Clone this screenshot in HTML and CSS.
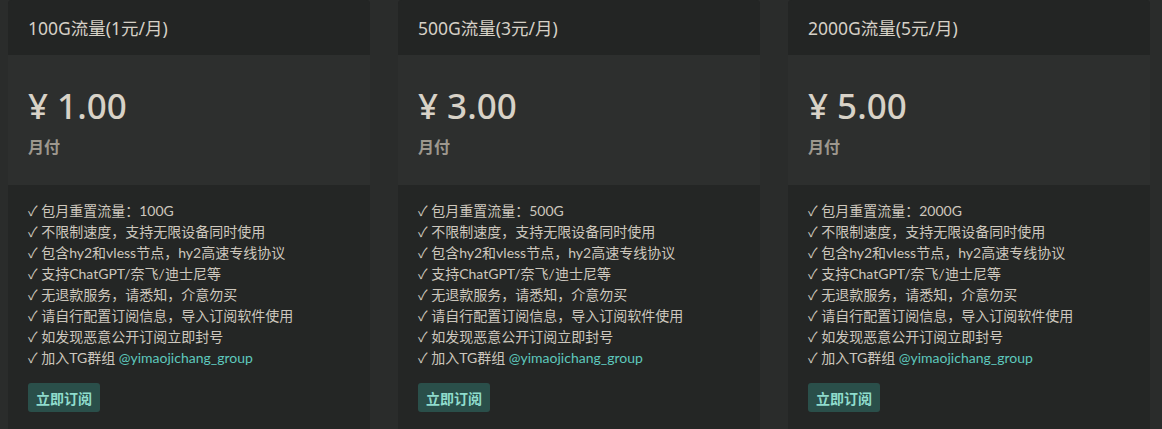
FILE: index.html
```
<!DOCTYPE html>
<html lang="zh-CN">
<head>
    <meta charset="UTF-8">
    <meta name="viewport" content="width=device-width, initial-scale=1.0">
    <title>套餐</title>
    <link rel="stylesheet" href="styles.css">
</head>
<body>
    <div class="planes">
        <div class="plan">
            <div class="plan-head">100G流量(1元/月)</div>
            <div class="plan-precio">
                <div class="monto">¥ 1.00</div>
                <div class="periodo">月付</div>
            </div>
            <div class="plan-cuerpo">
                <ul class="lista">
                    <li>✓ 包月重置流量：100G</li>
                    <li>✓ 不限制速度，支持无限设备同时使用</li>
                    <li>✓ 包含hy2和vless节点，hy2高速专线协议</li>
                    <li>✓ 支持ChatGPT/奈飞/迪士尼等</li>
                    <li>✓ 无退款服务，请悉知，介意勿买</li>
                    <li>✓ 请自行配置订阅信息，导入订阅软件使用</li>
                    <li>✓ 如发现恶意公开订阅立即封号</li>
                    <li>✓ 加入TG群组 <a href="#">@yimaojichang_group</a></li>
                </ul>
                <button class="boton">立即订阅</button>
            </div>
        </div>
        <div class="plan">
            <div class="plan-head">500G流量(3元/月)</div>
            <div class="plan-precio">
                <div class="monto">¥ 3.00</div>
                <div class="periodo">月付</div>
            </div>
            <div class="plan-cuerpo">
                <ul class="lista">
                    <li>✓ 包月重置流量：500G</li>
                    <li>✓ 不限制速度，支持无限设备同时使用</li>
                    <li>✓ 包含hy2和vless节点，hy2高速专线协议</li>
                    <li>✓ 支持ChatGPT/奈飞/迪士尼等</li>
                    <li>✓ 无退款服务，请悉知，介意勿买</li>
                    <li>✓ 请自行配置订阅信息，导入订阅软件使用</li>
                    <li>✓ 如发现恶意公开订阅立即封号</li>
                    <li>✓ 加入TG群组 <a href="#">@yimaojichang_group</a></li>
                </ul>
                <button class="boton">立即订阅</button>
            </div>
        </div>
        <div class="plan">
            <div class="plan-head">2000G流量(5元/月)</div>
            <div class="plan-precio">
                <div class="monto">¥ 5.00</div>
                <div class="periodo">月付</div>
            </div>
            <div class="plan-cuerpo">
                <ul class="lista">
                    <li>✓ 包月重置流量：2000G</li>
                    <li>✓ 不限制速度，支持无限设备同时使用</li>
                    <li>✓ 包含hy2和vless节点，hy2高速专线协议</li>
                    <li>✓ 支持ChatGPT/奈飞/迪士尼等</li>
                    <li>✓ 无退款服务，请悉知，介意勿买</li>
                    <li>✓ 请自行配置订阅信息，导入订阅软件使用</li>
                    <li>✓ 如发现恶意公开订阅立即封号</li>
                    <li>✓ 加入TG群组 <a href="#">@yimaojichang_group</a></li>
                </ul>
                <button class="boton">立即订阅</button>
            </div>
        </div>
    </div>
</body>
</html>
```
FILE: styles.css
```
body {
    margin: 0;
    background: #2a2c2b;
    color: #cdc7bd;
    font-family: "Noto Sans", "Noto Sans CJK SC", sans-serif;
    height: 429px;
    overflow: hidden;
}
.planes {
    display: flex;
    gap: 28px;
    padding-left: 8px;
    height: 429px;
}
.plan {
    width: 362px;
    display: flex;
    flex-direction: column;
    background: #242625;
    border-radius: 4px 4px 0 0;
}
.plan-head {
    height: 55px;
    box-sizing: border-box;
    padding: 0 20px;
    display: flex;
    align-items: center;
    font-size: 17.5px;
    color: #d6d0c6;
    background: #232524;
    border-radius: 4px 4px 0 0;
}
.plan-precio {
    height: 130px;
    box-sizing: border-box;
    padding: 27px 20px 0;
    background: #2d2f2e;
}
.monto {
    font-size: 35px;
    font-weight: 500;
    line-height: 48px;
    color: #d8d2c7;
}
.periodo {
    margin-top: 6px;
    font-size: 16px;
    font-weight: bold;
    color: #9e988e;
    line-height: 22px;
}
.plan-cuerpo {
    flex: 1;
    padding: 15px 20px 0;
}
.lista {
    list-style: none;
    margin: 0;
    padding: 0;
    font-family: Lato, "Noto Sans CJK SC", sans-serif;
    font-size: 14px;
    line-height: 21px;
}
.lista a {
    color: #5ec8bd;
    text-decoration: none;
}
.boton {
    margin-top: 15px;
    height: 29px;
    padding: 0 8px;
    border: none;
    border-radius: 3px;
    background: #2a4f4a;
    color: #8fdccd;
    font-family: "Noto Sans", "Noto Sans CJK SC", sans-serif;
    font-size: 14px;
    font-weight: bold;
    cursor: pointer;
}
```
